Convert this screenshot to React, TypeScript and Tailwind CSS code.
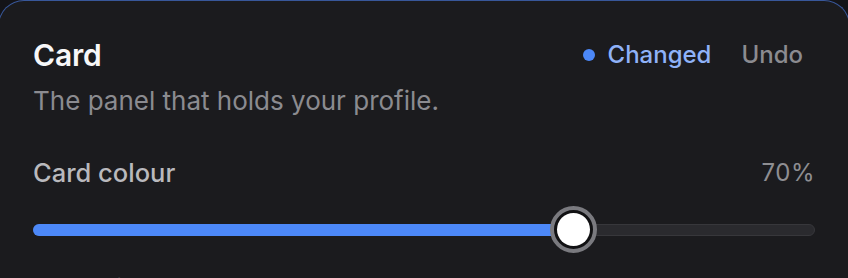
import React from "react";

export default function App() {
  const value = 70;
  return (
    <div className="w-[848px] h-[278px] overflow-hidden bg-[#141418]" style={{ fontFamily: "Inter, 'Noto Sans', sans-serif" }}>
      <div className="-mx-[2px] w-[852px] rounded-t-[26px] border border-b-0 border-[#38579a] bg-[#1b1b1e] pl-[34px] pr-[34px] pt-[36px]">
        <div className="flex items-center justify-between">
          <h2 className="text-[30px] leading-[36px] font-semibold text-[#f7f7f8] tracking-[-0.2px]">Card</h2>
          <div className="flex items-center">
            <span className="w-[12px] h-[12px] rounded-full bg-[#4c88f8]" />
            <span className="ml-[13px] text-[24px] leading-[30px] font-medium text-[#8fb2f8]">Changed</span>
            <button className="ml-[18px] px-[12px] text-[24px] leading-[30px] font-medium text-[#8b8b90]">Undo</button>
          </div>
        </div>
        <p className="mt-[12px] text-[26px] leading-[32px] text-[#8b8b90]">The panel that holds your profile.</p>
        <div className="mt-[40px] flex items-center justify-between">
          <span className="text-[25.5px] leading-[32px] font-medium text-[#b9b9bd]">Card colour</span>
          <span className="text-[24px] leading-[32px] text-[#8e8e92] tracking-[0.5px]">{value}%</span>
        </div>
        <div className="mt-[17px] relative h-[47px] flex items-center">
          <div className="relative w-full h-[12px] rounded-full bg-[#2a2a2e] border border-[#37373b]">
            <div className="absolute -left-px -top-px h-[12px] rounded-full bg-[#4c88f8]" style={{ width: `${value - 0.6}%` }} />
          </div>
          <div
            className="absolute top-0 w-[47px] h-[47px] rounded-full border-[4px] border-[#7a7a7f] bg-[#111113] p-[3px]"
            style={{ left: `calc(${value}% - 30px)` }}
          >
            <div className="w-full h-full rounded-full bg-white" />
          </div>
        </div>
        <p className="mt-[20px] text-[26px] leading-[32px] text-[#8b8b90]">Lower it to let the background show through.</p>
      </div>
    </div>
  );
}
